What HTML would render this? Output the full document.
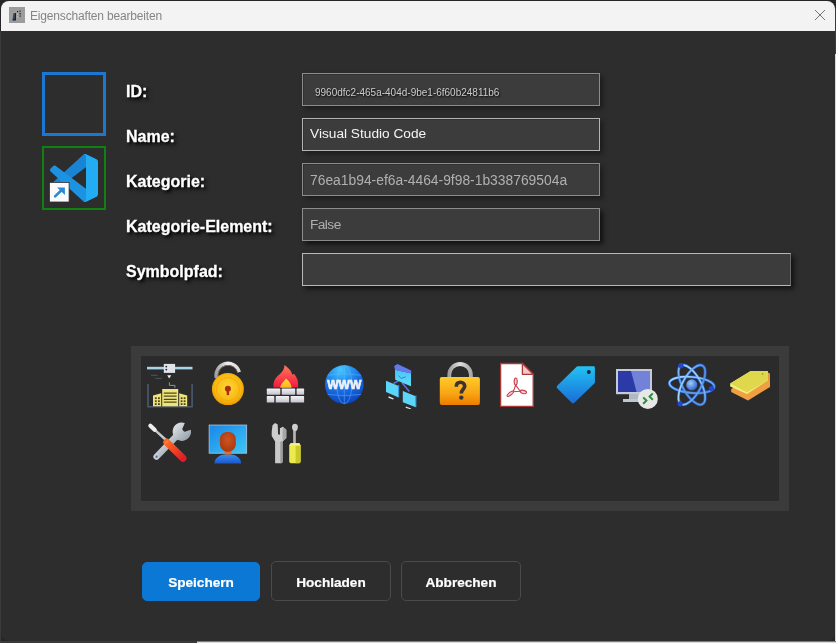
<!DOCTYPE html>
<html><head><meta charset="utf-8">
<style>
html,body{margin:0;padding:0;width:836px;height:643px;overflow:hidden;background:#262626;}
body{position:relative;font-family:"Liberation Sans",sans-serif;}
.abs{position:absolute;}
#outR{left:835px;top:54px;width:1px;height:589px;background:#d8d8d8;}
#outRT{left:835px;top:8px;width:1px;height:46px;background:#3a3a3a;}
#outB{left:197px;top:641px;width:639px;height:2px;background:linear-gradient(#7a7a7a 0 50%,#dcdcdc 50% 100%);}
#outBL{left:0;top:641px;width:197px;height:2px;background:#3a3a3a;}
#outL{left:0;top:31px;width:1px;height:612px;background:#3a3a3a;}
#win{will-change:transform;left:1px;top:1px;width:834px;height:640px;background:#2d2d2d;border-radius:8px;overflow:hidden;}
#title{left:0;top:0;width:834px;height:30px;background:#f3f3f3;}
#ttext{left:29px;top:8px;font-size:12px;letter-spacing:-0.17px;color:#858585;white-space:nowrap;}
.lbl{position:absolute;left:125px;font-size:16px;font-weight:bold;color:#fff;white-space:nowrap;-webkit-text-stroke:0.3px #fff;text-shadow:2px 2px 3px rgba(0,0,0,.95),3px 3px 4px rgba(0,0,0,.5);}
.box{position:absolute;left:301px;height:31px;background:#3c3c3c;border:1px solid #8c8c8c;box-shadow:3px 3px 5px rgba(0,0,0,.38), inset 1px 1px 0 rgba(0,0,0,.18);}
.val{position:absolute;left:8px;font-size:13.7px;white-space:nowrap;}
.btn{position:absolute;top:560px;width:118px;height:38px;border:1px solid #4a4a4a;border-radius:5px;color:#fff;font-weight:bold;font-size:13.6px;-webkit-text-stroke:0.2px #fff;text-align:center;line-height:41px;}
</style></head><body>
<div class="abs" id="outR"></div>
<div class="abs" id="outRT"></div>
<div class="abs" id="outB"></div>
<div class="abs" id="outBL"></div>
<div class="abs" id="outL"></div>
<div class="abs" id="win">
  <div class="abs" id="title">
    <svg class="abs" style="left:8px;top:6px" width="16" height="16" viewBox="0 0 16 16">
      <rect width="16" height="16" fill="#9c9c9c"/>
      <path d="M3.5 13.5L4.5 6.5L7 6V13.5Z" fill="#1c2024"/>
      <rect x="4.5" y="7" width="1" height="5" fill="#4a6a8a"/>
      <rect x="8" y="4" width="1.2" height="1.2" fill="#1c2024"/><rect x="10.5" y="3.5" width="1.2" height="1.2" fill="#1c2024"/>
      <rect x="8" y="6.5" width="1.2" height="1.5" fill="#7ad8f0"/><rect x="10.5" y="6" width="1.2" height="1.5" fill="#1c2024"/>
      <rect x="8" y="9" width="1.2" height="1.5" fill="#7ad8f0"/><rect x="10.5" y="8.5" width="1.2" height="1.2" fill="#1c2024"/>
    </svg>
    <div class="abs" id="ttext">Eigenschaften bearbeiten</div>
    <svg class="abs" style="left:813px;top:8px" width="12" height="12" viewBox="0 0 12 12"><path d="M1 1L11 11M11 1L1 11" stroke="#747474" stroke-width="1"/></svg>
  </div>
  <!-- left squares -->
  <div class="abs" style="left:41px;top:71px;width:58px;height:58px;border:3px solid #1a78d2;"></div>
  <div class="abs" style="left:41px;top:145px;width:60px;height:60px;border:2px solid #118011;"></div>

  <!-- VS Code logo -->
  <svg class="abs" style="left:43px;top:147px" width="60" height="60" viewBox="0 0 60 60">
    <g transform="translate(6,6) scale(0.48)">
      <path fill="#1a84d4" d="M96.4614 10.7962L75.8569 0.875542C73.4719 -0.272773 70.6217 0.211611 68.75 2.08333L1.29858 63.5832C-0.515693 65.2373 -0.513607 68.0937 1.30308 69.7452L6.81272 74.754C8.29793 76.1042 10.5347 76.2036 12.1338 74.9905L93.3609 13.3699C96.0859 11.3026 100 13.2462 100 16.6667V16.4275C100 14.0265 98.6246 11.8378 96.4614 10.7962Z"/>
      <path fill="#1e92e2" d="M96.4614 89.2038L75.8569 99.1245C73.4719 100.273 70.6217 99.7884 68.75 97.9167L1.29858 36.4169C-0.515693 34.7627 -0.513607 31.9063 1.30308 30.2548L6.81272 25.246C8.29793 23.8958 10.5347 23.7964 12.1338 25.0095L93.3609 86.6301C96.0859 88.6974 100 86.7538 100 83.3334V83.5726C100 85.9735 98.6246 88.1622 96.4614 89.2038Z"/>
      <path fill="#24acf2" d="M75.8578 99.1263C73.4721 100.274 70.6219 99.7885 68.75 97.9166C71.0564 100.223 75 98.5895 75 95.3278V4.67213C75 1.41039 71.0564 -0.223106 68.75 2.08329C70.6219 0.211402 73.4721 -0.273666 75.8578 0.873633L96.4587 10.7807C98.6234 11.8217 100 14.0112 100 16.4132V83.5871C100 85.9891 98.6234 88.1786 96.4586 89.2196L75.8578 99.1263Z"/>
    </g>
    <g transform="translate(-0.9,-0.6)"><rect x="6.4" y="35" width="19.6" height="19.6" fill="#fbfbfb" stroke="#2d2d2d" stroke-width="0.8"/>
    <path d="M12 49L18.6 42.6" stroke="#2b88d8" stroke-width="2.6" stroke-linecap="round"/>
    <path d="M14 40.1H21.8V47.6Z" fill="#2b88d8"/></g>
  </svg>

  <!-- labels -->
  <div class="lbl" style="top:82px">ID:</div>
  <div class="lbl" style="top:127px">Name:</div>
  <div class="lbl" style="top:172px">Kategorie:</div>
  <div class="lbl" style="top:217px">Kategorie-Element:</div>
  <div class="lbl" style="top:262px">Symbolpfad:</div>

  <!-- boxes -->
  <div class="box" style="top:72px;width:296px;"><div class="val" style="left:12px;top:13px;font-size:10px;color:#cccccc;text-shadow:1px 1px 2px #000">9960dfc2-465a-404d-9be1-6f60b24811b6</div></div>
  <div class="box" style="top:117px;width:296px;border-color:#b4b4b4;"><div class="val" style="left:7px;top:7px;color:#f4f4f4">Visual Studio Code</div></div>
  <div class="box" style="top:162px;width:296px;"><div class="val" style="left:7px;top:8px;font-size:13.85px;color:#b0b0b0">76ea1b94-ef6a-4464-9f98-1b338769504a</div></div>
  <div class="box" style="top:207px;width:296px;box-shadow:3px 3px 5px rgba(0,0,0,.65);"><div class="val" style="left:7px;top:8px;color:#b0b0b0;letter-spacing:-0.55px">False</div></div>
  <div class="box" style="top:252px;width:487px;border-color:#b8b8b8;border-right-color:#6a6a6a;box-shadow:3px 3px 5px rgba(0,0,0,.6);"></div>

  <!-- panel -->
  <div class="abs" style="left:130px;top:345px;width:638px;height:145px;border:10px solid #3b3b3b;background:#2b2b2b;"></div>

  <!-- icon panel -->
  <!-- 1 printer/buildings -->
  <svg class="abs" style="left:145px;top:360px" width="48" height="48" viewBox="0 0 48 48">
    <rect x="1" y="5.8" width="45.5" height="2.6" fill="#a8d4ea"/>
    <rect x="17.8" y="2.9" width="11.3" height="9" fill="#dfe3ea"/>
    <circle cx="20.3" cy="5.6" r="0.9" fill="#222"/><circle cx="20.3" cy="8.6" r="0.9" fill="#222"/>
    <path d="M21.2 14.2H25.2L23.2 17.4Z" fill="#f0f0f0"/>
    <path d="M23.4 21.3V24.4H28.9V26.8" fill="none" stroke="#8a96a6" stroke-width="1"/>
    <path d="M5 14.3H11.7M9.3 17.4H16.2" stroke="#505a66" stroke-width="0.9"/>
    <path d="M2 23V45.7H46.1V23" fill="none" stroke="#4a5a6c" stroke-width="1.6"/>
    <rect x="16.2" y="28" width="16" height="17.3" fill="#eee47a"/>
    <path d="M17.8 32.2H30.6M17.8 35.2H30.6M17.8 38.3H30.6M17.8 41.2H30.6" stroke="#4e4820" stroke-width="1.3"/>
    <path d="M7 34.4L15.2 32.2V45.3H7Z" fill="#eee47a"/>
    <path d="M33.2 32.2L41.2 34.4V45.3H33.2Z" fill="#eee47a"/>
    <g fill="#4a4418">
      <rect x="8.9" y="36.3" width="1.8" height="1.8"/><rect x="12" y="36.3" width="1.8" height="1.8"/><rect x="8.9" y="39.3" width="1.8" height="1.8"/><rect x="12" y="39.3" width="1.8" height="1.8"/><rect x="8.9" y="42.2" width="1.8" height="1.8"/><rect x="12" y="42.2" width="1.8" height="1.8"/>
      <rect x="34.7" y="36.3" width="1.8" height="1.8"/><rect x="37.7" y="36.3" width="1.8" height="1.8"/><rect x="34.7" y="39.3" width="1.8" height="1.8"/><rect x="37.7" y="39.3" width="1.8" height="1.8"/><rect x="34.7" y="42.2" width="1.8" height="1.8"/><rect x="37.7" y="42.2" width="1.8" height="1.8"/>
    </g>
  </svg>
  <!-- 2 open padlock -->
  <svg class="abs" style="left:203px;top:360px" width="48" height="48" viewBox="0 0 48 48">
    <defs>
      <linearGradient id="shk2" x1="0" y1="0" x2="1" y2="0"><stop offset="0" stop-color="#a0a0a8"/><stop offset="0.5" stop-color="#f0f0f4"/><stop offset="1" stop-color="#d8d8e0"/></linearGradient>
      <radialGradient id="lk2" cx="0.5" cy="0.45" r="0.55"><stop offset="0" stop-color="#ffd63a"/><stop offset="0.75" stop-color="#f8b810"/><stop offset="1" stop-color="#e89a00"/></radialGradient>
    </defs>
    <path d="M12.4 17A11.6 11.6 0 0 1 35.3 11.2" fill="none" stroke="url(#shk2)" stroke-width="3.3"/>
    <path d="M14.2 16.6A10 10 0 0 1 34 12.2" fill="none" stroke="#a88458" stroke-width="0.9" opacity="0.8"/>
    <circle cx="23.9" cy="28.1" r="16" fill="url(#lk2)"/>
    <circle cx="23.9" cy="28.1" r="11.5" fill="none" stroke="#e8a400" stroke-width="0.9" opacity="0.7"/>
    <circle cx="23.9" cy="27.8" r="3" fill="#ac2e10"/>
    <rect x="22.7" y="28.5" width="2.4" height="5.6" fill="#ac2e10"/>
  </svg>
  <!-- 3 firewall -->
  <svg class="abs" style="left:261px;top:360px" width="48" height="48" viewBox="0 0 48 48">
    <defs>
      <linearGradient id="fl3" x1="0" y1="0" x2="0" y2="1"><stop offset="0" stop-color="#ff7a5a"/><stop offset="1" stop-color="#f01a40"/></linearGradient>
      <linearGradient id="fy3" x1="0" y1="0" x2="0" y2="1"><stop offset="0" stop-color="#ffe030"/><stop offset="1" stop-color="#ffb020"/></linearGradient>
      <linearGradient id="br3" x1="0" y1="0" x2="0" y2="1"><stop offset="0" stop-color="#f2f2f6"/><stop offset="1" stop-color="#c4c4cc"/></linearGradient>
    </defs>
    <path d="M22.5 3.9C27 7 30 10.5 30.2 13.8C31 12.8 32 13 32.4 13.3C35.5 17 36.8 21.5 36 26.5H11.6C10.8 21 13 17 17.4 13.5C20.5 11 22.5 7.5 22.5 3.9Z" fill="url(#fl3)"/>
    <path d="M23.9 17.4C27 20 29.6 23 29.5 26.8H18.3C18.3 23 21.5 21 23.9 17.4Z" fill="url(#fy3)"/>
    <g fill="url(#br3)">
      <rect x="4.8" y="27.6" width="13.5" height="6.1" rx="0.6"/><rect x="19.7" y="27.6" width="13.5" height="6.1" rx="0.6"/><rect x="34.6" y="27.6" width="7.5" height="6.1" rx="0.6"/>
      <rect x="4.8" y="35.1" width="7.5" height="6.5" rx="0.6"/><rect x="13.7" y="35.1" width="13.5" height="6.5" rx="0.6"/><rect x="28.6" y="35.1" width="13.5" height="6.5" rx="0.6"/>
    </g>
  </svg>
  <!-- 4 www globe -->
  <svg class="abs" style="left:319px;top:360px" width="48" height="48" viewBox="0 0 48 48">
    <defs>
      <radialGradient id="gl4" cx="0.4" cy="0.12" r="0.95"><stop offset="0" stop-color="#40c8ff"/><stop offset="0.5" stop-color="#1a74e8"/><stop offset="1" stop-color="#0a3cb8"/></radialGradient>
    </defs>
    <circle cx="24.3" cy="23.6" r="19.3" fill="url(#gl4)"/>
    <g fill="none" stroke="#6ab8f8" stroke-width="0.9" opacity="0.55">
      <ellipse cx="24.3" cy="23.6" rx="7.5" ry="19.2"/><path d="M7.5 14.2Q24.3 11.5 41.1 14.2M7.5 33.4Q24.3 36 41.1 33.4M24.3 4.3V42.9"/>
    </g>
    <text x="7.2" y="28.3" font-family="Liberation Sans" font-weight="bold" font-size="12" fill="#eef0f8" stroke="#eef0f8" stroke-width="0.7" textLength="34.2" lengthAdjust="spacingAndGlyphs">WWW</text>
  </svg>
  <!-- 5 network -->
  <svg class="abs" style="left:377px;top:360px" width="48" height="48" viewBox="0 0 48 48">
    <path d="M15.5 22.5L20.5 19.8M23.9 21.5L31.3 30.5" stroke="#6470e0" stroke-width="1.5" fill="none"/>
    <defs><linearGradient id="ev5" x1="0" y1="0" x2="0" y2="1"><stop offset="0" stop-color="#4cc4f4"/><stop offset="1" stop-color="#5ee0fa"/></linearGradient></defs>
    <path d="M17 8.8L33 12.2V25.2L17.2 18.8Z" fill="url(#ev5)"/>
    <path d="M16.2 5L19.5 2.9L33.2 9.6V12.4L17 9Z" fill="#6478ee"/>
    <path d="M20.3 14.6L23.2 17.4L27.8 15.8" stroke="#3a7ed8" stroke-width="1" fill="none"/>
    <path d="M8 19.7L20.6 24.9V36.5L8 31Z" fill="#5cd6f8"/>
    <path d="M19.8 24.6L21.2 24V36.2L20.6 36.5Z" fill="#3a9ae6"/>
    <path d="M10.8 35.3L15.9 37.4L15 38.6L10.3 36.8Z" fill="#dfe2ea"/>
    <path d="M24.8 30L37.8 35.2V46.3L24.8 41.2Z" fill="#5cd6f8"/>
    <path d="M37 34.9L38.4 34.3V46L37.8 46.3Z" fill="#3a9ae6"/>
    <path d="M28 45.5L33.2 47.5L32.5 48.3L27.5 46.7Z" fill="#dfe2ea"/>
  </svg>
  <!-- 6 padlock ? -->
  <svg class="abs" style="left:435px;top:360px" width="48" height="48" viewBox="0 0 48 48">
    <defs>
      <linearGradient id="sh6" x1="0" y1="0" x2="1" y2="0"><stop offset="0" stop-color="#a0a0a0"/><stop offset="0.5" stop-color="#e0e0e0"/><stop offset="1" stop-color="#a8a8a8"/></linearGradient>
      <linearGradient id="bd6" x1="0" y1="0" x2="0" y2="1"><stop offset="0" stop-color="#ffcc2a"/><stop offset="0.6" stop-color="#f8a414"/><stop offset="1" stop-color="#ee7c00"/></linearGradient>
    </defs>
    <path d="M13.3 17V13.8A10.8 10.8 0 0 1 34.9 13.8V17" fill="none" stroke="url(#sh6)" stroke-width="3.8"/>
    <rect x="3.8" y="16" width="40.1" height="28" rx="2" fill="url(#bd6)"/>
    <path d="M20.3 25.8C20.3 23 22 21.3 24.5 21.3C27.1 21.3 28.7 23 28.7 25.2C28.7 28 25.3 28.6 25.3 32.4" fill="none" stroke="#3a3530" stroke-width="3.6" stroke-linecap="butt"/>
    <circle cx="25.3" cy="36.6" r="2.2" fill="#3a3530"/>
  </svg>
  <!-- 7 pdf -->
  <svg class="abs" style="left:493px;top:360px" width="48" height="48" viewBox="0 0 48 48">
    <g transform="translate(0,1.9)">
    <path d="M6.6 0.6H28.4L39.2 11.4V43.4H6.6Z" fill="#fff" stroke="#a83a3a" stroke-width="1.3"/>
    <path d="M28.4 0.6V11.4H39.2Z" fill="#f9c6c6" stroke="#a83a3a" stroke-width="1.3" stroke-linejoin="round"/>
    </g>
    <g fill="#f6d0d6" stroke="#c8404e" stroke-width="1.1">
      <ellipse cx="21.7" cy="20.6" rx="1.5" ry="3.6"/>
      <ellipse cx="16.3" cy="32.7" rx="3.9" ry="1.4" transform="rotate(-38 16.3 32.7)"/>
      <ellipse cx="29.4" cy="30.9" rx="3.2" ry="1.6" transform="rotate(14 29.4 30.9)"/>
      <path d="M21.7 24.2L19.2 30.7L26.2 30.2Z" fill="none"/>
    </g>
  </svg>
  <!-- 8 tag -->
  <svg class="abs" style="left:551px;top:360px" width="48" height="48" viewBox="0 0 48 48">
    <defs>
      <linearGradient id="tg8" x1="0" y1="0" x2="0" y2="1"><stop offset="0" stop-color="#22c2f4"/><stop offset="1" stop-color="#1a6cd6"/></linearGradient>
    </defs>
    <path d="M25.5 5.3H41.5Q42.9 5.3 42.9 6.7V21.2Q42.9 22 42.3 22.6L22.3 41.8Q21 43 19.7 41.8L5.2 27.2Q4 26 5.2 24.8L24.6 5.8Q25 5.3 25.5 5.3Z" fill="url(#tg8)"/>
    <circle cx="36.8" cy="10.9" r="2" fill="#1b2a3c"/>
  </svg>
  <!-- 9 remote desktop -->
  <svg class="abs" style="left:609px;top:360px" width="48" height="48" viewBox="0 0 48 48">
    <rect x="6" y="8" width="36" height="25.2" fill="#c4cad6"/>
    <rect x="8" y="10" width="32" height="21" fill="#7282d8"/>
    <path d="M8 10H21L26.6 31H8Z" fill="#2c3aa8"/>
    <rect x="19" y="33" width="11" height="6" fill="#b0b8c4"/>
    <rect x="13" y="38" width="17" height="3" fill="#c0c6d0"/>
    <circle cx="37.8" cy="37.9" r="10" fill="#e6e8e6"/>
    <path d="M33.2 36.4L36.4 39.6L33.2 42.8M42.8 32.4L39.6 35.6L42.8 38.8" fill="none" stroke="#2a8c3c" stroke-width="2"/>
  </svg>
  <!-- 10 atom -->
  <svg class="abs" style="left:667px;top:360px" width="48" height="48" viewBox="0 0 48 48">
    <defs>
      <radialGradient id="nu10" cx="0.4" cy="0.35" r="0.7"><stop offset="0" stop-color="#a0ccff"/><stop offset="1" stop-color="#2a5cc4"/></radialGradient>
      <linearGradient id="st10" x1="0" y1="0" x2="1" y2="1"><stop offset="0" stop-color="#b8e4ff"/><stop offset="0.5" stop-color="#6cb0f4"/><stop offset="1" stop-color="#4a88e0"/></linearGradient>
    </defs>
    <g fill="none" stroke="#2c5cc4" stroke-width="3">
      <ellipse cx="23.8" cy="23.9" rx="22.5" ry="8" transform="rotate(5 23.8 23.9)"/>
      <ellipse cx="23.8" cy="23.9" rx="22" ry="9.2" transform="rotate(61 23.8 23.9)"/>
      <ellipse cx="23.8" cy="23.9" rx="22" ry="9.2" transform="rotate(-61 23.8 23.9)"/>
    </g>
    <g fill="none" stroke="url(#st10)" stroke-width="1.6">
      <ellipse cx="23.8" cy="23.9" rx="22.5" ry="8" transform="rotate(5 23.8 23.9)"/>
      <ellipse cx="23.8" cy="23.9" rx="22" ry="9.2" transform="rotate(61 23.8 23.9)"/>
      <ellipse cx="23.8" cy="23.9" rx="22" ry="9.2" transform="rotate(-61 23.8 23.9)"/>
    </g>
    <circle cx="23.8" cy="23.9" r="5.6" fill="url(#nu10)"/>
    <circle cx="13" cy="4.6" r="2.6" fill="#2448d0"/>
    <circle cx="43.6" cy="27.6" r="2.6" fill="#2448d0"/>
    <circle cx="12.2" cy="42.8" r="2.6" fill="#2448d0"/>
  </svg>
  <!-- 11 stacked tags -->
  <svg class="abs" style="left:725px;top:360px" width="48" height="48" viewBox="0 0 48 48">
    <path d="M5.2 28L26 16.5H44V26L22 39.5L5.2 31Z" fill="#f0a040"/>
    <path d="M4.2 22.5L24.7 10H42V19.3L21 33L4.2 25.5Z" fill="#f4f080"/>
    <path d="M4.2 22.5L24.7 10H42V19.3L21 31.6Z" fill="#e0d84c"/>
    <path d="M42 11.5L44 12.5V20.5L42 19.3Z" fill="#e89838"/>
    <circle cx="36.5" cy="13" r="0.8" fill="#9a8a20"/>
  </svg>
  <!-- row 2 -->
  <!-- 12 wrench + red screwdriver -->
  <svg class="abs" style="left:145px;top:418px" width="48" height="48" viewBox="0 0 48 48">
    <defs>
      <linearGradient id="wr12" x1="0" y1="0" x2="1" y2="1"><stop offset="0" stop-color="#e8ecf0"/><stop offset="1" stop-color="#8c96a0"/></linearGradient>
      <linearGradient id="rd12" x1="0" y1="0" x2="1" y2="1"><stop offset="0" stop-color="#ff6a22"/><stop offset="1" stop-color="#e01c28"/></linearGradient>
    </defs>
    <path d="M10.6 37.6L30.5 17" stroke="url(#wr12)" stroke-width="6.4" stroke-linecap="round"/>
    <path d="M38.8 4A9.2 9.2 0 1 0 44.8 10.7L40.8 12A2.7 2.7 0 0 1 37 8.2Z" fill="url(#wr12)"/>
    <rect x="9" y="36" width="3.2" height="3.2" rx="0.8" fill="#4a6aa4" stroke="#e4e8f0" stroke-width="0.9"/>
    <path d="M5.5 7.8L20.5 21.5" stroke="#c4c8d0" stroke-width="2.4" stroke-linecap="round"/>
    <path d="M4.4 6.8L8.6 10.8" stroke="#eceef2" stroke-width="4.2" stroke-linecap="round"/>
    <path d="M20.8 23.2L37 39.2" stroke="url(#rd12)" stroke-width="7" stroke-linecap="round"/>
    <path d="M19.5 24.5L22.3 21.7" stroke="#ff8a40" stroke-width="1.2" opacity="0.8"/>
  </svg>
  <!-- 13 user monitor -->
  <svg class="abs" style="left:203px;top:418px" width="48" height="48" viewBox="0 0 48 48">
    <defs>
      <linearGradient id="sc13" x1="0" y1="0" x2="1" y2="1"><stop offset="0" stop-color="#1a86e6"/><stop offset="1" stop-color="#3cc8f8"/></linearGradient>
      <radialGradient id="hd13" cx="0.5" cy="0.4" r="0.65"><stop offset="0" stop-color="#cc5420"/><stop offset="1" stop-color="#a8380e"/></radialGradient>
      <linearGradient id="bd13" x1="0" y1="0" x2="0" y2="1"><stop offset="0" stop-color="#3a90f0"/><stop offset="1" stop-color="#1a56c8"/></linearGradient>
    </defs>
    <rect x="5.2" y="6.1" width="37.4" height="28.1" fill="url(#sc13)" stroke="#98b8d8" stroke-width="1"/>
    <path d="M10.4 44.6C10.6 38.5 16 35.2 23.8 35.2C31.6 35.2 37 38.5 37.2 44.6Z" fill="url(#bd13)"/>
    <rect x="20.5" y="30" width="7" height="5.5" fill="#d8703c"/>
    <path d="M15.9 20.5C15.9 15.5 19 12.9 23.8 12.9C28.6 12.9 31.8 15.5 31.8 20.5V25C31.8 29.5 28 32.8 23.8 32.8C19.6 32.8 15.9 29.5 15.9 25Z" fill="url(#hd13)"/>
  </svg>
  <!-- 14 gray wrench + yellow screwdriver -->
  <svg class="abs" style="left:261px;top:418px" width="48" height="48" viewBox="0 0 48 48">
    <path d="M13.1 21H20.6V43.2L19.2 44.3H13.1Z" fill="#c8c8c8"/>
    <path d="M18.3 21H20.6V43.2L19.2 44.3H18.3Z" fill="#9c9c9c"/>
    <path d="M9.7 12.5L10.5 6.2L13.1 4L15.7 5.5L16.1 15.2L17.9 15.8L17.9 9.2L20.9 7.7L24.3 10.7V18.9L20.6 22.6H13.1L9.7 17Z" fill="#cdcdcd"/>
    <path d="M20.9 7.7L24.3 10.7V18.9L20.6 22.6V14Z" fill="#a6a6a6"/>
    <path d="M30 8C30 5.5 31.4 4.7 32.9 4.7C34.4 4.7 35.9 5.5 35.9 8C35.9 10 34.6 12.2 34 12.2H31.8C31.2 12.2 30 10 30 8Z" fill="#cfcfcf"/>
    <rect x="31.2" y="12" width="2.8" height="13" fill="#bcbcbc"/>
    <rect x="32.9" y="12" width="1.1" height="13" fill="#9a9a9a"/>
    <path d="M27.2 26.4L28.6 24.2H37.4L38.6 26.4V43L37.2 44.3H28.6L27.2 43Z" fill="#ecea4c"/>
    <path d="M33.6 26.4H38.6V43L37.2 44.3H33.6Z" fill="#cbc82c"/>
    <path d="M28.6 24.2H37.4L38.6 26.4H27.2Z" fill="#f6f488"/>
  </svg>
  <!-- buttons -->
  <div class="btn" style="left:141px;top:561px;width:116px;height:37px;line-height:39px;background:#0c78d6;border-color:#0c78d6;">Speichern</div>
  <div class="btn" style="left:270px;">Hochladen</div>
  <div class="btn" style="left:400px;">Abbrechen</div>
</div>
</body></html>
